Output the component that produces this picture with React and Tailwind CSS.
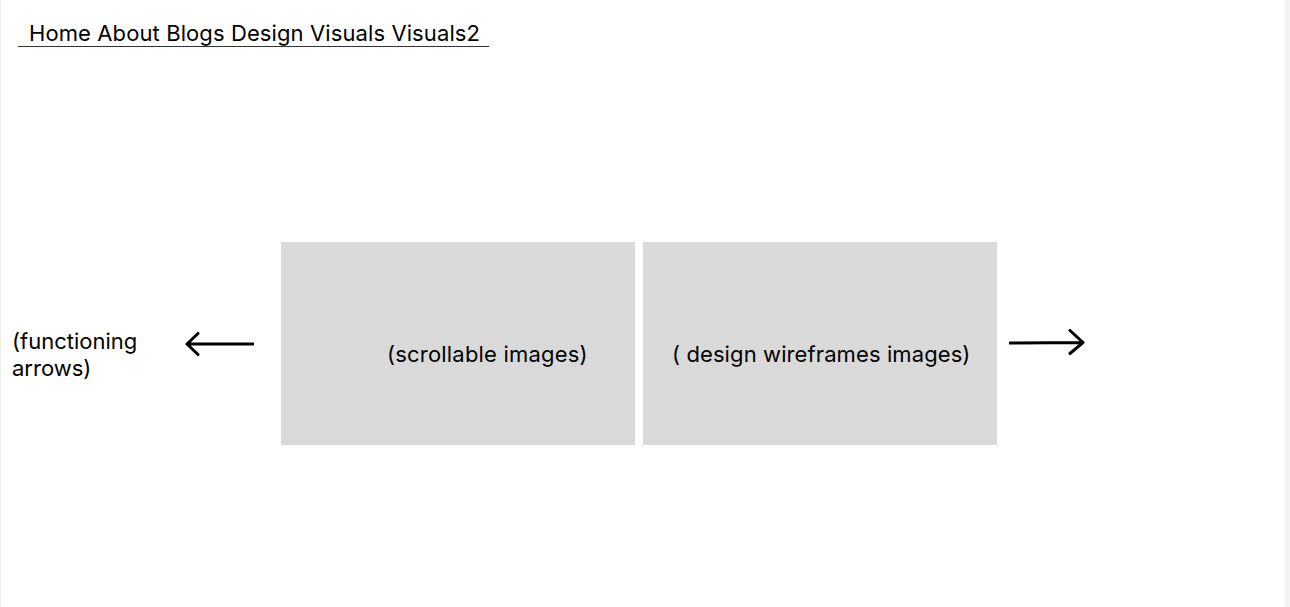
export default function App() {
    return (
        <div className="flex h-[607px] w-full bg-white font-['Inter',sans-serif] text-black">
            <main className="flex flex-1 flex-col border-l border-[#ececec]">
                {/* Top nav */}
                <nav className="pl-[17px] pt-[21px]">
                    <div className="inline-block border-b border-[#333] pl-[11px] pr-[9px] text-[22px] leading-[25px] tracking-[0.1px]">
                        Home About Blogs Design Visuals Visuals2
                    </div>
                </nav>

                {/* Carousel */}
                <section className="mt-[195px] flex items-start pl-[10px]">
                    <p className="mt-[86px] w-[174px] pl-[1px] text-[22px] leading-[27px]">
                        (functioning
                        <br />
                        arrows)
                    </p>
                    <svg className="mt-[90px]" width="69" height="24" viewBox="0 0 69 24" fill="none" stroke="black" strokeWidth="3" strokeLinecap="round" strokeLinejoin="round">
                        <path d="M68 12H2M13 1.5L2 12l11 10.5" />
                    </svg>
                    <div className="ml-[27px] flex h-[203px] w-[354px] items-center bg-[#d9d9d9] pl-[106px] pt-[22px] text-[22px] tracking-[0.2px]">
                        (scrollable images)
                    </div>
                    <div className="ml-[8px] flex h-[203px] w-[354px] items-center bg-[#d9d9d9] pl-[29px] pt-[22px] text-[22px] tracking-[0.1px]">
                        ( design wireframes images)
                    </div>
                    <svg className="ml-[12px] mt-[87px]" width="76" height="26" viewBox="0 0 76 26" fill="none" stroke="black" strokeWidth="3" strokeLinecap="round" strokeLinejoin="round">
                        <path d="M1 14l73-0.5M61 1.5L74 13.5L61 24.5" />
                    </svg>
                </section>
            </main>
            <aside className="w-[5px] bg-[#f3f3f3]" />
        </div>
    );
}
